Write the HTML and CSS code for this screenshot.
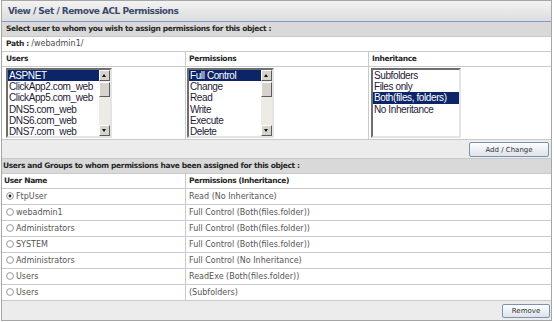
FILE: index.html
```html
<!DOCTYPE html>
<html>
<head>
	<title>ACL Permissions</title>
	<link rel="stylesheet" href="styles.css">
</head>
<body>
	<div class="panel">
		<div class="title">View / Set / Remove ACL Permissions</div>
		<div class="grid">
			<div class="cell section span3 bold">Select user to whom you wish to assign permissions for this object :</div>
			<div class="cell line span3 first"><span class="bold">Path :</span> /webadmin1/</div>
			<div class="cell line bold first">Users</div>
			<div class="cell line bold">Permissions</div>
			<div class="cell line bold">Inheritance</div>

			<div class="cell lists first">
				<div class="listbox users">
					<div class="items">
						<div class="item selected">ASPNET</div>
						<div class="item">ClickApp2.com_web</div>
						<div class="item">ClickApp5.com_web</div>
						<div class="item">DNS5.com_web</div>
						<div class="item">DNS6.com_web</div>
						<div class="item">DNS7.com_web</div>
					</div>
					<div class="scrollbar">
						<span class="arrow up"></span>
						<span class="thumb"></span>
						<span class="track"></span>
						<span class="arrow down"></span>
					</div>
				</div>
			</div>
			<div class="cell lists second">
				<div class="listbox perms">
					<div class="items">
						<div class="item selected">Full Control</div>
						<div class="item">Change</div>
						<div class="item">Read</div>
						<div class="item">Write</div>
						<div class="item">Execute</div>
						<div class="item">Delete</div>
					</div>
					<div class="scrollbar">
						<span class="arrow up"></span>
						<span class="thumb"></span>
						<span class="track"></span>
						<span class="arrow down"></span>
					</div>
				</div>
			</div>
			<div class="cell lists third">
				<div class="listbox inherit">
					<div class="items">
						<div class="item">Subfolders</div>
						<div class="item">Files only</div>
						<div class="item selected">Both(files, folders)</div>
						<div class="item">No Inheritance</div>
					</div>
				</div>
			</div>

			<div class="cell actions span3 top-actions">
				<button type="button" class="btn add">Add / Change</button>
			</div>

			<div class="cell section span3 bold low">Users and Groups to whom permissions have been assigned for this object :</div>
			<div class="cell line bold low">User Name</div>
			<div class="cell line bold span2">Permissions (Inheritance)</div>

			<div class="cell row user">
				<svg class="radio" width="8" height="8" viewBox="0 0 8 8"><circle cx="4" cy="4" r="3.4" fill="#fff" stroke="#8c8c8c" stroke-width="0.9"/><circle cx="4" cy="4" r="1.4" fill="#222"/></svg>
				FtpUser
			</div>
			<div class="cell row span2">Read (No Inheritance)</div>

			<div class="cell row user">
				<svg class="radio" width="8" height="8" viewBox="0 0 8 8"><circle cx="4" cy="4" r="3.4" fill="#fff" stroke="#8c8c8c" stroke-width="0.9"/></svg>
				webadmin1
			</div>
			<div class="cell row span2">Full Control (Both(files.folder))</div>

			<div class="cell row user">
				<svg class="radio" width="8" height="8" viewBox="0 0 8 8"><circle cx="4" cy="4" r="3.4" fill="#fff" stroke="#8c8c8c" stroke-width="0.9"/></svg>
				Administrators
			</div>
			<div class="cell row span2">Full Control (Both(files.folder))</div>

			<div class="cell row user">
				<svg class="radio" width="8" height="8" viewBox="0 0 8 8"><circle cx="4" cy="4" r="3.4" fill="#fff" stroke="#8c8c8c" stroke-width="0.9"/></svg>
				SYSTEM
			</div>
			<div class="cell row span2">Full Control (Both(files.folder))</div>

			<div class="cell row user">
				<svg class="radio" width="8" height="8" viewBox="0 0 8 8"><circle cx="4" cy="4" r="3.4" fill="#fff" stroke="#8c8c8c" stroke-width="0.9"/></svg>
				Administrators
			</div>
			<div class="cell row span2">Full Control (No Inheritance)</div>

			<div class="cell row user">
				<svg class="radio" width="8" height="8" viewBox="0 0 8 8"><circle cx="4" cy="4" r="3.4" fill="#fff" stroke="#8c8c8c" stroke-width="0.9"/></svg>
				Users
			</div>
			<div class="cell row span2">ReadExe (Both(files.folder))</div>

			<div class="cell row user">
				<svg class="radio" width="8" height="8" viewBox="0 0 8 8"><circle cx="4" cy="4" r="3.4" fill="#fff" stroke="#8c8c8c" stroke-width="0.9"/></svg>
				Users
			</div>
			<div class="cell row span2">(Subfolders)</div>

			<div class="cell actions span3 bottom-actions">
				<button type="button" class="btn remove">Remove</button>
			</div>
		</div>
	</div>
</body>
</html>
```

FILE: styles.css
```css
body {
	margin: 0;
	background: #fff;
	color: #4a4a4a;
	font-family: "DejaVu Sans", Verdana, sans-serif;
	font-size: 8px;
}

.panel {
	width: 549px;
	margin-left: 1px;
	border: 1px solid #a6a6a6;
}

.title {
	height: 20px;
	line-height: 20px;
	padding-left: 6px;
	font-weight: bold;
	font-size: 9px;
	letter-spacing: -0.5px;
	color: #3c4a6a;
	background: linear-gradient(#f3f3f3, #dcdcdc);
	border-bottom: 1px solid #7d99d8;
}

.grid {
	display: grid;
	grid-template-columns: 183px 182px 182px;
	gap: 1px;
	background: #c9c9c9;
}

.cell {
	background: #fff;
	padding-left: 3px;
}

.span3 {
	grid-column: 1 / 4;
}

.span2 {
	grid-column: 2 / 4;
}

.bold {
	font-weight: bold;
	font-size: 7.5px;
	letter-spacing: -0.35px;
	color: #262626;
}

.section {
	height: 14px;
	line-height: 14px;
	padding-left: 4px;
	background: #d9d9d9;
}

.section.low {
	padding-left: 1px;
}

.line {
	height: 14px;
	line-height: 14px;
}

.first {
	padding-left: 4px;
}

.line.low {
	padding-left: 2px;
}

/* list boxes */

.lists {
	height: 70px;
	padding-top: 1px;
	padding-bottom: 1px;
}

.lists.second {
	padding-left: 1px;
}

.lists.third {
	padding-left: 2px;
}

.listbox {
	display: flex;
	box-sizing: border-box;
	height: 70px;
	background: #fff;
	border: 2px solid;
	border-color: #6e6e6e #e4e4e4 #e4e4e4 #6e6e6e;
	overflow: hidden;
	font-family: "Liberation Sans", Arial, sans-serif;
	font-size: 10px;
	letter-spacing: -0.4px;
	color: #1e1a36;
}

.listbox.users {
	width: 106px;
}

.listbox.perms {
	width: 87px;
}

.listbox.inherit {
	width: 90px;
}

.items {
	flex: 1;
	overflow: hidden;
}

.item {
	height: 11.2px;
	line-height: 11.2px;
	padding-left: 1px;
	white-space: nowrap;
}

.item.selected {
	background: #0c2568;
	color: #fff;
}

.scrollbar {
	display: flex;
	flex-direction: column;
	width: 11px;
	background: #ecebe6;
}

.arrow,
.thumb {
	box-sizing: border-box;
	display: block;
	width: 11px;
	background: #d6d3cc;
	border: 1px solid;
	border-color: #fff #5c5c5c #5c5c5c #fff;
}

.arrow {
	position: relative;
	height: 11px;
}

.arrow::after {
	content: "";
	position: absolute;
	left: 2px;
	width: 0;
	height: 0;
	border-left: 2.5px solid transparent;
	border-right: 2.5px solid transparent;
}

.arrow.up::after {
	top: 3px;
	border-bottom: 3px solid #111;
}

.arrow.down::after {
	top: 3px;
	border-top: 3px solid #111;
}

.thumb {
	height: 15px;
	margin-top: 1px;
}

.track {
	flex: 1;
}

/* buttons */

.actions {
	display: flex;
	justify-content: flex-end;
	align-items: center;
	background: #ececec;
	padding-right: 2px;
}

.top-actions {
	height: 18px;
}

.bottom-actions {
	height: 19px;
	padding-right: 1px;
}

.btn {
	font-family: "DejaVu Sans", Verdana, sans-serif;
	font-size: 7px;
	color: #333;
	padding: 0;
	border: 1px solid #7e92ad;
	border-radius: 2px;
	background: linear-gradient(#fcfdfe, #dde3ea);
}

.btn.add {
	width: 80px;
	height: 15px;
	margin-top: 1px;
}

.btn.remove {
	width: 48px;
	height: 14px;
}

/* assigned table */

.row {
	height: 15px;
	line-height: 15px;
	color: #555;
}

.row.user {
	display: flex;
	align-items: center;
	gap: 2px;
	padding-left: 4px;
}

.radio {
	margin-top: -1px;
}
```
